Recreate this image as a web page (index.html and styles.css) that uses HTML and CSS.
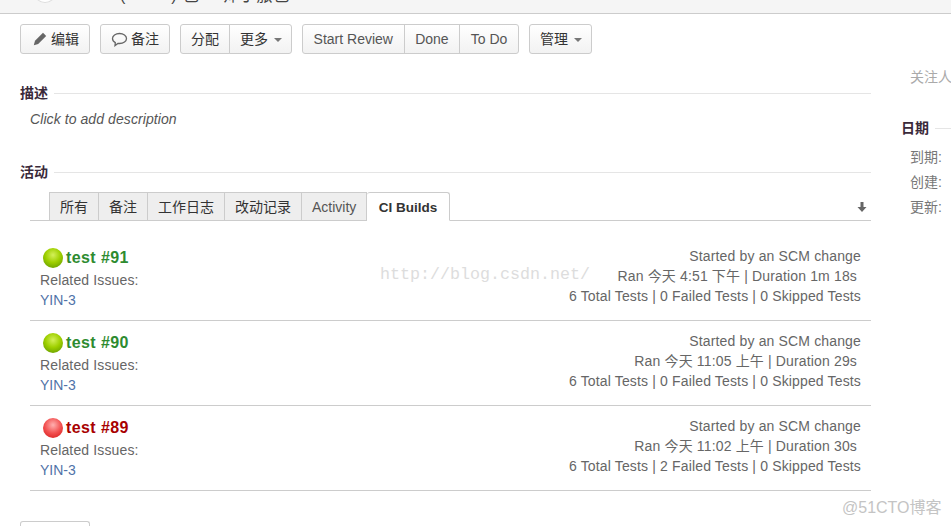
FILE: index.html
```html
<!DOCTYPE html>
<html lang="zh">
<head>
<meta charset="utf-8">
<title>CI Builds</title>
<link rel="stylesheet" href="styles.css">
</head>
<body>
<header class="top"><span class="top-avatar"></span><span class="top-text">( 一一 ) 己一 师丁旅已</span></header>
<div class="page">
  <main class="main">
    <div class="toolbar">
      <a class="btn"><svg class="ic" width="14" height="14" viewBox="0 0 14 14"><path d="M10 .8l3.200 3.200-8 8L.8 13.200 2 8.800z" fill="#666"/></svg>编辑</a>
      <a class="btn"><svg class="ic-b" width="17" height="15" viewBox="0 0 17 15"><path d="M8.500 1.500c4 0 7 2.200 7 5s-3 5-7 5c-.6 0-1.100 0-1.600-.1L4 13.600l.3-3C2.600 9.700 1.500 8.300 1.500 6.500c0-2.800 3-5 7-5z" fill="none" stroke="#666" stroke-width="1.300"/></svg>备注</a>
      <div class="group"><a class="btn">分配</a><a class="btn more">更多<i class="caret"></i></a></div>
      <div class="group en"><a class="btn">Start Review</a><a class="btn">Done</a><a class="btn">To Do</a></div>
      <a class="btn more">管理<i class="caret"></i></a>
    </div>
    <section class="sec desc">
      <h2 class="sec-title"><span>描述</span></h2>
      <p class="placeholder">Click to add description</p>
    </section>
    <section class="sec">
      <h2 class="sec-title"><span>活动</span></h2>
      <div class="tabs">
        <a class="tab">所有</a><a class="tab">备注</a><a class="tab">工作日志</a><a class="tab">改动记录</a><a class="tab en">Activity</a><a class="tab on">CI Builds</a>
        <svg class="sort" width="10" height="10" viewBox="0 0 10 10"><path d="M3.500 0h3v5H9.500L5 10 .5 5h3z" fill="#666"/></svg>
      </div>
      <div class="build">
        <div class="b-left">
          <div class="b-name ok"><i class="ball green"></i>test #91</div>
          <div class="rel">Related Issues:</div>
          <a class="issue">YIN-3</a>
        </div>
        <div class="b-right">
          <div>Started by an SCM change</div>
          <div class="ran">Ran 今天 4:51 下午 | Duration 1m 18s</div>
          <div>6 Total Tests | 0 Failed Tests | 0 Skipped Tests</div>
        </div>
      </div>
      <div class="build">
        <div class="b-left">
          <div class="b-name ok"><i class="ball green"></i>test #90</div>
          <div class="rel">Related Issues:</div>
          <a class="issue">YIN-3</a>
        </div>
        <div class="b-right">
          <div>Started by an SCM change</div>
          <div class="ran">Ran 今天 11:05 上午 | Duration 29s</div>
          <div>6 Total Tests | 0 Failed Tests | 0 Skipped Tests</div>
        </div>
      </div>
      <div class="build">
        <div class="b-left">
          <div class="b-name bad"><i class="ball red"></i>test #89</div>
          <div class="rel">Related Issues:</div>
          <a class="issue">YIN-3</a>
        </div>
        <div class="b-right">
          <div>Started by an SCM change</div>
          <div class="ran">Ran 今天 11:02 上午 | Duration 30s</div>
          <div>6 Total Tests | 2 Failed Tests | 0 Skipped Tests</div>
        </div>
      </div>
    </section>
    <div class="bottom-btn"></div>
  </main>
  <aside class="side">
    <div class="watchers">关注人</div>
    <h2 class="sec-title"><span>日期</span></h2>
    <ul class="dates"><li>到期:</li><li>创建:</li><li>更新:</li></ul>
  </aside>
</div>
<div class="wm-blog">http://blog.csdn.net/</div>
<div class="wm-cto">@51CTO博客</div>
</body>
</html>
```
FILE: styles.css
```css
* { box-sizing: border-box; }
html, body { margin: 0; height: 526px; overflow: hidden; }
body { background: #fff; color: #555; font: 14px/20px "Liberation Sans", "Noto Sans CJK SC", sans-serif; position: relative; }
.top { height: 14px; background: #f5f5f5; border-bottom: 1px solid #ccc; overflow: hidden; position: relative; color: #444; font-size: 16px; line-height: 14px; }
.top-avatar { position: absolute; left: 34px; top: -18px; width: 22px; height: 21px; border-radius: 50%; background: #fff; border: 1px solid #ddd; }
.top-text { display: block; margin-left: 120px; margin-top: -11px; white-space: nowrap; letter-spacing: 1px; }
.page { display: flex; }
.main { width: 851px; margin-left: 20px; flex: none; }
.toolbar { display: flex; gap: 10px; margin-top: 10px; }
.btn { display: inline-flex; align-items: center; height: 30px; padding: 0 10px; color: #333; font-size: 14px; border: 1px solid #ccc; border-radius: 3px; background: linear-gradient(#fff, #f2f2f2); white-space: nowrap; }
.ic { margin: 0 4px 0 2px; }
.ic-b { margin: 0 3px 0 0; }
.more { padding-right: 9px; }
.caret { display: inline-block; margin-left: 6px; margin-top: 1px; border: 4px solid transparent; border-top-color: #777; border-bottom: 0; }
.group { display: flex; }
.group .btn { border-radius: 0; margin-left: -1px; }
.group .btn:first-child { border-radius: 3px 0 0 3px; margin-left: 0; }
.group .btn:last-child { border-radius: 0 3px 3px 0; }
.group.en .btn { color: #555; padding: 0 10.6px; }
.sec-title { display: flex; align-items: center; margin: 0; font-size: 14px; line-height: 20px; font-weight: bold; color: #3a2a3a; }
.sec-title::after { content: ""; flex: 1; height: 1px; background: #e5e5e5; margin-left: 6px; }
.desc { margin-top: 29px; }
.placeholder { margin: 6px 0 0 10px; font-style: italic; color: #555; letter-spacing: .08px; }
.desc + .sec { margin-top: 33px; }
.tabs { display: flex; align-items: flex-end; height: 29px; margin: 10px 0 15px 10px; padding-left: 19px; border-bottom: 1px solid #ccc; position: relative; }
.tab { height: 29px; margin-bottom: -1px; padding: 0 10px; line-height: 29px; background: #eee; color: #333; border: 1px solid #ccc; border-left-width: 0; white-space: nowrap; }
.tab:first-child { border-left-width: 1px; }
.tab.en { color: #555; padding: 0 10px; }
.tab.on { background: #fff; border-bottom-color: #fff; border-radius: 3px 3px 0 0; font-weight: bold; color: #333; font-size: 13.5px; padding: 0 11.5px; }
.sort { margin: 0 4px 8px auto; }
.build { display: flex; justify-content: space-between; height: 85px; margin-left: 10px; padding: 10px 10px 0; border-bottom: 1px solid #ccc; }
.b-left { line-height: 20px; }
.b-name { display: flex; align-items: center; height: 20px; font-size: 16px; font-weight: bold; margin: 2px 0 2px; letter-spacing: .4px; }
.rel { line-height: 20px; color: #666; letter-spacing: .14px; }
.ok { color: #2e8b30; }
.bad { color: #a80000; }
.ball { width: 20px; height: 20px; border-radius: 50%; margin: 0 3px; flex: none; }
.green { background: radial-gradient(circle at 50% 35%, #d4f05a 0, #9fd000 45%, #6aa000 85%, #6f9e20 100%); }
.red { background: radial-gradient(circle at 50% 35%, #ffb0b0 0, #f25050 50%, #d82020 90%, #d86060 100%); }
.issue { display: block; color: #4f73a8; }
.b-right { text-align: right; color: #666; letter-spacing: .15px; }
.b-right .ran { padding-right: 4px; }
.bottom-btn { width: 70px; height: 8px; margin-top: 30px; border: 1px solid #ccc; border-bottom: 0; border-radius: 3px 3px 0 0; }
.side { flex: none; width: 50px; margin-left: 30px; overflow: hidden; white-space: nowrap; }
.watchers { margin: 53px 0 0 9px; color: #aaa; }
.side .sec-title { margin-top: 31px; }
.dates { list-style: none; margin: 7px 0 0 9px; padding: 0; line-height: 25px; color: #777; }
.wm-blog { position: absolute; left: 380px; top: 265px; font: 16.67px/20px "Liberation Mono", monospace; color: #ddd; }
.wm-cto { position: absolute; left: 842px; top: 498px; font-size: 16px; line-height: 20px; color: #c4c4c4; }
```
